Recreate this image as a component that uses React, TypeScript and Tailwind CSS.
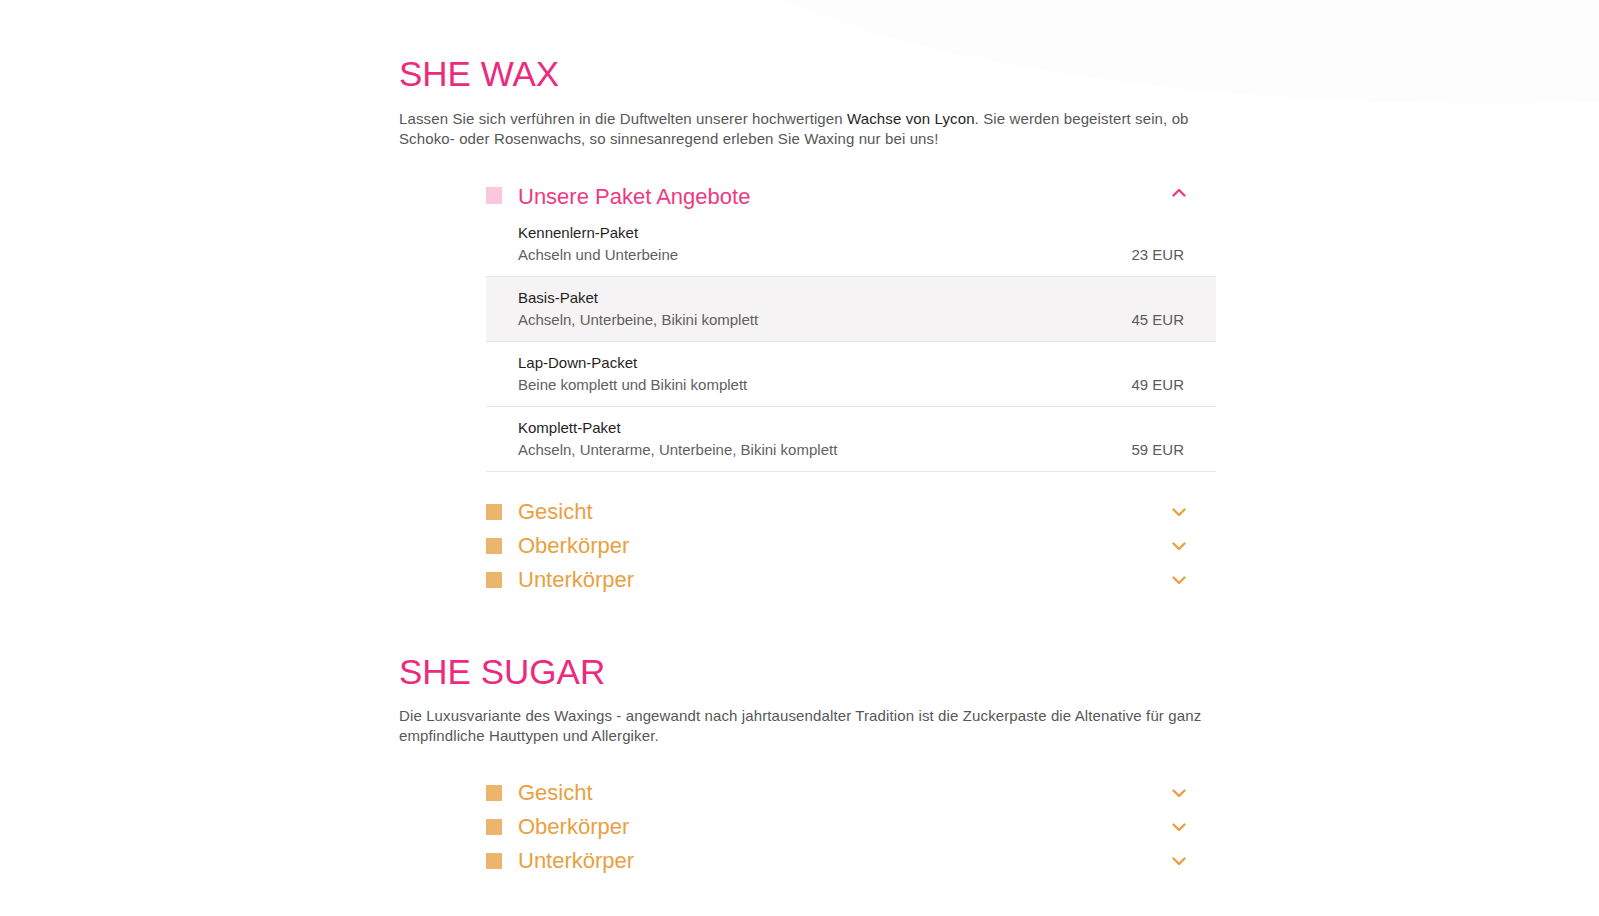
import React from "react";

type Paket = { title: string; desc: string; price: string };

const pakete: Paket[] = [
    { title: "Kennenlern-Paket", desc: "Achseln und Unterbeine", price: "23 EUR" },
    { title: "Basis-Paket", desc: "Achseln, Unterbeine, Bikini komplett", price: "45 EUR" },
    { title: "Lap-Down-Packet", desc: "Beine komplett und Bikini komplett", price: "49 EUR" },
    { title: "Komplett-Paket", desc: "Achseln, Unterarme, Unterbeine, Bikini komplett", price: "59 EUR" },
];

function Chevron({ up, color }: { up?: boolean; color: string }) {
    return (
        <svg width="14" height="9" viewBox="0 0 14 9" fill="none">
            <polyline
                points={up ? "1.5,7.5 7,2 12.5,7.5" : "1.5,1.5 7,7 12.5,1.5"}
                stroke={color}
                strokeWidth="2.4"
                strokeLinecap="round"
                strokeLinejoin="round"
            />
        </svg>
    );
}

function Category({ title }: { title: string }) {
    return (
        <div className="flex h-[28px] items-center pr-[30px]">
            <span className="h-[16px] w-[16px] bg-[#edb46e]" />
            <span className="ml-[16px] flex-1 text-[22px] leading-[28px] text-[#e99f42]">{title}</span>
            <Chevron color="#e99f42" />
        </div>
    );
}

function Categories() {
    return (
        <div className="flex flex-col gap-[6px]">
            <Category title="Gesicht" />
            <Category title="Oberkörper" />
            <Category title="Unterkörper" />
        </div>
    );
}

function PaketList() {
    return (
        <div>
            <div className="flex h-[28px] items-center pr-[30px]">
                <span className="-mt-[3px] h-[17px] w-[16px] bg-[#fac7de]" />
                <span className="ml-[16px] flex-1 text-[22px] leading-[28px] text-[#ec3a84]">Unsere Paket Angebote</span>
                <span className="-mt-[10px]">
                    <Chevron up color="#ee3d88" />
                </span>
            </div>
            <div className="mt-[1px] flex flex-col">
                {pakete.map((p, i) => (
                    <div
                        key={p.title}
                        className={
                            "flex items-end justify-between border-b border-[#e6e6e6] px-[32px] pt-[10px] pb-[10px] " +
                            (i === 1 ? "bg-[#f5f3f4]" : "bg-white")
                        }
                    >
                        <div className="flex flex-col">
                            <span className="text-[15px] leading-[22px] text-[#1f1f1f]">{p.title}</span>
                            <span className="text-[15px] leading-[22px] text-[#5f5f5f]">{p.desc}</span>
                        </div>
                        <span className="text-[15px] leading-[22px] text-[#5a5a5a]">{p.price}</span>
                    </div>
                ))}
            </div>
        </div>
    );
}

export default function App() {
    return (
        <div className="relative min-h-[916px] w-full overflow-hidden bg-white font-['Liberation_Sans',Arial,sans-serif]">
            <svg className="pointer-events-none absolute right-0 top-0" width="820" height="120" viewBox="0 0 820 120">
                <path d="M0,0 C180,75 480,112 820,102 L820,0 Z" fill="#fdfdfd" />
            </svg>
            <div className="relative ml-[399px] w-[817px] pt-[54px]">
                <section>
                    <h2 className="text-[35px] leading-[40px] text-[#ec2a7e]">SHE WAX</h2>
                    <p className="mt-[15px] text-[15px] leading-[19.5px] tracking-[0.12px] text-[#575757]">
                        Lassen Sie sich verführen in die Duftwelten unserer hochwertigen{" "}
                        <span className="text-[#1f1f1f]">Wachse von Lycon</span>. Sie werden begeistert sein, ob
                        Schoko- oder Rosenwachs, so sinnesanregend erleben Sie Waxing nur bei uns!
                    </p>
                    <div className="ml-[87px] mt-[35px]">
                        <PaketList />
                        <div className="mt-[26px]">
                            <Categories />
                        </div>
                    </div>
                </section>
                <section className="mt-[58px]">
                    <h2 className="text-[35px] leading-[40px] text-[#ec2a7e]">SHE SUGAR</h2>
                    <p className="mt-[14px] text-[15px] leading-[19.5px] tracking-[0.12px] text-[#575757]">
                        Die Luxusvariante des Waxings - angewandt nach jahrtausendalter Tradition ist die Zuckerpaste die
                        Altenative für ganz empfindliche Hauttypen und Allergiker.
                    </p>
                    <div className="ml-[87px] mt-[34px]">
                        <Categories />
                    </div>
                </section>
            </div>
        </div>
    );
}
